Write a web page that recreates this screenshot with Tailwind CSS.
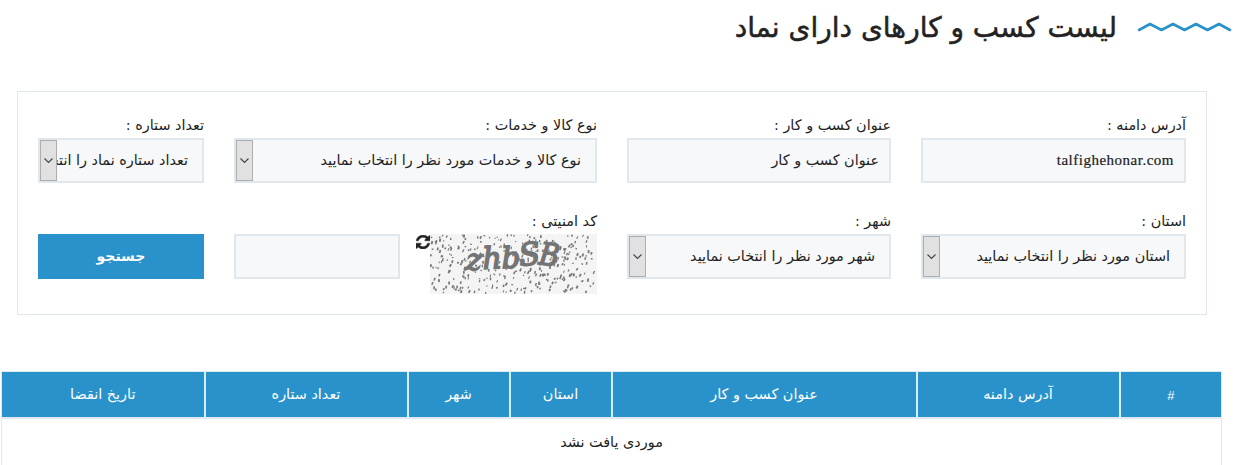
<!DOCTYPE html>
<html lang="fa" dir="rtl">

<head>
  <meta charset="UTF-8" />
  <meta name="viewport" content="width=device-width, initial-scale=1" />
  <title>لیست کسب و کارهای دارای نماد</title>
  <script src="https://cdn.jsdelivr.net/npm/@tailwindcss/browser@4"></script>
</head>

<body class="bg-white text-[#222] font-['DejaVu_Sans',sans-serif] text-[14.4px] overflow-hidden">
  <header class="flex items-center h-[54px] pr-[15px] gap-5">
    <svg class="w-[95px] h-[12px]" viewBox="0 0 95 12" fill="none" stroke="#2a92ca" stroke-width="2.6" stroke-linecap="round" stroke-linejoin="round">
      <path d="M2 9L13 3L24.500 9L36 3L47.500 9L59 3L70.500 9L82 3L93 9" />
    </svg>
    <h1 class="text-[28px] pt-0.5 [-webkit-text-stroke:0.5px_#222]">لیست کسب و کارهای دارای نماد</h1>
  </header>

  <form id="searchForm" class="mt-[37px] mr-10 w-[1190px] h-[224px] border border-[#e1e8ec] px-5 pt-[22px]">
    <div class="grid grid-cols-[265px_264px_363px_166px] gap-x-[30px] gap-y-3">
      <div class="h-[84px]">
        <label class="block h-6 leading-[22px]">آدرس دامنه :</label>
        <div class="h-[45px] border-2 border-[#e1e8ed] bg-[#f6f8fa] px-2.5 leading-[40px] font-['Liberation_Serif',serif] text-[15px] tracking-[0.5px] [-webkit-text-stroke:0.2px_#222]">talfighehonar.com</div>
      </div>
      <div>
        <label class="block h-6 leading-[22px]">عنوان کسب و کار :</label>
        <div class="h-[45px] border-2 border-[#e1e8ed] bg-[#f6f8fa] px-2.5 leading-[41px]">عنوان کسب و کار</div>
      </div>
      <div>
        <label class="block h-6 leading-[22px]">نوع کالا و خدمات :</label>
        <div class="flex h-[45px] border-2 border-[#e1e8ed] bg-[#f6f8fa]">
          <span class="flex-1 overflow-hidden whitespace-nowrap pr-3.5 leading-[41px]">نوع کالا و خدمات مورد نظر را انتخاب نمایید</span>
          <span class="w-[17px] shrink-0 border border-[#adadad] bg-[#e1e1e1] flex items-center justify-center">
            <svg class="w-[9px] h-[6px]" viewBox="0 0 9 6" fill="none" stroke="#444" stroke-width="1.100"><path d="M.5 .5L4.500 4.500L8.500 .5" /></svg>
          </span>
        </div>
      </div>
      <div>
        <label class="block h-6 leading-[22px]">تعداد ستاره :</label>
        <div class="flex h-[45px] border-2 border-[#e1e8ed] bg-[#f6f8fa]">
          <span class="flex-1 overflow-hidden whitespace-nowrap pr-3.5 leading-[41px]">تعداد ستاره نماد را انتخاب نمایید</span>
          <span class="w-[17px] shrink-0 border border-[#adadad] bg-[#e1e1e1] flex items-center justify-center">
            <svg class="w-[9px] h-[6px]" viewBox="0 0 9 6" fill="none" stroke="#444" stroke-width="1.100"><path d="M.5 .5L4.500 4.500L8.500 .5" /></svg>
          </span>
        </div>
      </div>

      <div>
        <label class="block h-6 leading-[22px]">استان :</label>
        <div class="flex h-[45px] border-2 border-[#e1e8ed] bg-[#f6f8fa]">
          <span class="flex-1 overflow-hidden whitespace-nowrap pr-3.5 leading-[41px]">استان مورد نظر را انتخاب نمایید</span>
          <span class="w-[17px] shrink-0 border border-[#adadad] bg-[#e1e1e1] flex items-center justify-center">
            <svg class="w-[9px] h-[6px]" viewBox="0 0 9 6" fill="none" stroke="#444" stroke-width="1.100"><path d="M.5 .5L4.500 4.500L8.500 .5" /></svg>
          </span>
        </div>
      </div>
      <div>
        <label class="block h-6 leading-[22px]">شهر :</label>
        <div class="flex h-[45px] border-2 border-[#e1e8ed] bg-[#f6f8fa]">
          <span class="flex-1 overflow-hidden whitespace-nowrap pr-3.5 leading-[41px]">شهر مورد نظر را انتخاب نمایید</span>
          <span class="w-[17px] shrink-0 border border-[#adadad] bg-[#e1e1e1] flex items-center justify-center">
            <svg class="w-[9px] h-[6px]" viewBox="0 0 9 6" fill="none" stroke="#444" stroke-width="1.100"><path d="M.5 .5L4.500 4.500L8.500 .5" /></svg>
          </span>
        </div>
      </div>
      <div>
        <label class="block h-6 leading-[22px]">کد امنیتی :</label>
        <div class="flex items-start h-[60px]">
          <svg id="captcha" class="w-[167px] h-[60px] bg-[#f4f4f4]" viewBox="0 0 167 60" direction="ltr">
            <g id="noise" fill="#777"></g>
            <g fill="#747474" stroke="#747474" stroke-width="1.6" font-family="DejaVu Serif" font-style="italic">
              <text transform="translate(35 36) skewX(-8)" font-size="30">z</text>
              <text transform="translate(53 35) rotate(-3)" font-size="30">h</text>
              <text transform="translate(72 34) rotate(-2)" font-size="29">b</text>
              <text transform="translate(90 32) rotate(-6)" font-size="31">S</text>
              <text transform="translate(108 30) rotate(8) scale(.88 1)" font-size="31">B</text>
            </g>
          </svg>
          <svg class="w-[14px] h-[14px] mt-[1px]" viewBox="0 0 1536 1536" fill="#222" stroke="#222" stroke-width="50">
            <path d="M1511 928q0 5-1 7-64 268-268 434.500T764 1536q-146 0-282.500-55T238 1324l-129 129q-19 19-45 19t-45-19-19-45V960q0-26 19-45t45-19h448q26 0 45 19t19 45-19 45l-137 137q71 66 161 102t187 36q134 0 250-65t186-179q11-17 53-117 8-23 30-23h192q13 0 22.500 9.500t9.500 22.500zm25-800v448q0 26-19 45t-45 19h-448q-26 0-45-19t-19-45 19-45l138-138Q969 256 768 256q-134 0-250 65T332 500q-11 17-53 117-8 23-30 23H50q-13 0-22.500-9.500T18 608v-7q65-268 270-434.500T768 0q146 0 284 55.500T1297 212l130-129q19-19 45-19t45 19 19 45z" />
          </svg>
          <div class="mr-auto w-[166px] h-[45px] border-2 border-[#e1e8ed] bg-[#f6f8fa]"></div>
        </div>
      </div>
      <button type="button" class="mt-6 h-[45px] bg-[#2a92ca] text-white text-[14px] font-bold">جستجو</button>
    </div>
  </form>

  <table class="mt-14 mr-[25px] w-[1220px] table-fixed border-collapse border border-[#dfe9f0] text-center">
    <colgroup>
      <col class="w-[102px]" />
      <col class="w-[203px]" />
      <col class="w-[305px]" />
      <col class="w-[102px]" />
      <col class="w-[102px]" />
      <col class="w-[203px]" />
      <col class="w-[203px]" />
    </colgroup>
    <thead>
      <tr class="h-[46px] bg-[#2a92ca] text-white border-b-2 border-[#dfeaf5]">
        <th class="pt-0.5 font-normal text-[13px] font-['Liberation_Sans',sans-serif] border-l-2 border-[#d5effa]">#</th>
        <th class="pt-0.5 font-normal border-l-2 border-[#d5effa]">آدرس دامنه</th>
        <th class="pt-0.5 font-normal border-l-2 border-[#d5effa]">عنوان کسب و کار</th>
        <th class="pt-0.5 font-normal border-l-2 border-[#d5effa]">استان</th>
        <th class="pt-0.5 font-normal border-l-2 border-[#d5effa]">شهر</th>
        <th class="pt-0.5 font-normal border-l-2 border-[#d5effa]">تعداد ستاره</th>
        <th class="pt-0.5 font-normal">تاریخ انقضا</th>
      </tr>
    </thead>
    <tbody>
      <tr class="h-[50px]">
        <td colspan="7">موردی یافت نشد</td>
      </tr>
    </tbody>
  </table>

  <script>
    // speckles behind the captcha letters
    let seed = 7;
    function rnd() {
      seed = (seed * 16807) % 2147483647;
      return seed / 2147483647;
    }
    let specks = '';
    for (let i = 0; i < 330; i++) {
      const w = 1 + rnd() * 0.9;
      const h = 1 + rnd() * 2.3;
      const x = rnd() * 165;
      const y = rnd() * 58;
      specks += `<rect x="${x}" y="${y}" width="${w}" height="${h}" transform="rotate(${rnd() * 30} ${x} ${y})" />`;
    }
    document.getElementById('noise').innerHTML = specks;
  </script>
</body>

</html>
